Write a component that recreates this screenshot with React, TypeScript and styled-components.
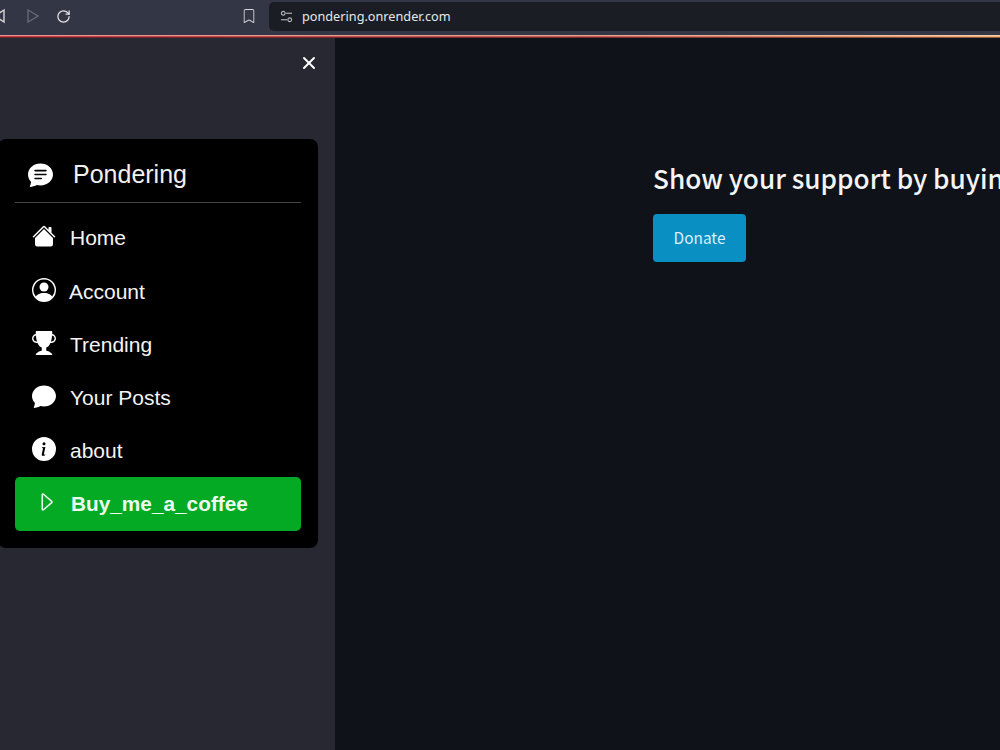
import styled, { createGlobalStyle } from "styled-components";
import { IconType } from "react-icons";
import {
  BsBookmark,
  BsCaretRight,
  BsChatFill,
  BsChatTextFill,
  BsHouseFill,
  BsInfoCircleFill,
  BsPersonCircle,
  BsTrophyFill,
} from "react-icons/bs";
import { LuRotateCw, LuX } from "react-icons/lu";

const GlobalStyle = createGlobalStyle`
  html, body {
    margin: 0;
    height: 100%;
    background: #0f1219;
    overflow: hidden;
  }
`;

type NavEntry = { label: string; icon: IconType; textGap: number };

const navItems: NavEntry[] = [
  { label: "Home", icon: BsHouseFill, textGap: 14 },
  { label: "Account", icon: BsPersonCircle, textGap: 13 },
  { label: "Trending", icon: BsTrophyFill, textGap: 14 },
  { label: "Your Posts", icon: BsChatFill, textGap: 14 },
  { label: "about", icon: BsInfoCircleFill, textGap: 14 },
];

export default function App() {
  return (
    <>
      <GlobalStyle />
      <Page>
        <Toolbar>
          <BackArrow viewBox="0 0 14 16">
            <path d="M12 2 L3 8 L12 14 Z" />
          </BackArrow>
          <ForwardArrow viewBox="0 0 14 16">
            <path d="M2 2 L12 8 L2 14 Z" />
          </ForwardArrow>
          <Reload>
            <LuRotateCw size={15} />
          </Reload>
          <Bookmark>
            <BsBookmark size={14} />
          </Bookmark>
          <AddressBar>
            <SiteIcon viewBox="0 0 14 14">
              <circle cx="3.5" cy="3.5" r="2" />
              <path d="M6.5 3.5 H13" />
              <circle cx="10.5" cy="10.5" r="2" />
              <path d="M1 10.5 H7.5" />
            </SiteIcon>
            <Url>pondering.onrender.com</Url>
          </AddressBar>
        </Toolbar>
        <LoadBar />
        <Main>
          <Sidebar>
            <CloseButton>
              <LuX size={20} strokeWidth={2.4} />
            </CloseButton>
            <MenuCard>
              <Brand>
                <BsChatTextFill size={25} />
                <BrandName>Pondering</BrandName>
              </Brand>
              <Divider />
              <NavList>
                {navItems.map((item) => (
                  <NavRow key={item.label} $gap={item.textGap}>
                    <NavIcon>
                      <item.icon size={24} />
                    </NavIcon>
                    {item.label}
                  </NavRow>
                ))}
                <CoffeeRow>
                  <CoffeeIcon>
                    <BsCaretRight size={24} />
                  </CoffeeIcon>
                  Buy_me_a_coffee
                </CoffeeRow>
              </NavList>
            </MenuCard>
          </Sidebar>
          <Content>
            <Heading>Show your support by buying me a coffee</Heading>
            <DonateButton>Donate</DonateButton>
          </Content>
        </Main>
      </Page>
    </>
  );
}

const Page = styled.div`
  display: flex;
  flex-direction: column;
  width: 1000px;
  height: 750px;
  overflow: hidden;
`;

const Toolbar = styled.div`
  display: flex;
  align-items: center;
  height: 35px;
  flex: none;
  background: #333644;
  color: #e4e5e9;
`;

const BackArrow = styled.svg`
  width: 14px;
  height: 16px;
  margin-left: -8px;
  margin-top: -3px;
  fill: none;
  stroke: #d5d6da;
  stroke-width: 1.4;
`;

const ForwardArrow = styled(BackArrow)`
  margin-left: 20px;
  stroke: #666a78;
`;

const Reload = styled.span`
  display: flex;
  margin-left: 16px;
  margin-top: -3px;
`;

const Bookmark = styled.span`
  display: flex;
  margin-left: 171px;
  margin-top: -3px;
  color: #d5d6da;
`;

const AddressBar = styled.div`
  display: flex;
  align-items: center;
  gap: 9px;
  height: 29px;
  margin: -3px 0 0 13px;
  padding-left: 11px;
  flex: 1;
  border-radius: 5px 0 0 5px;
  background: #1a1d24;
`;

const SiteIcon = styled.svg`
  width: 13px;
  height: 13px;
  fill: none;
  stroke: #b6b8bf;
  stroke-width: 1.2;
`;

const Url = styled.span`
  font: 12.7px "Noto Sans", sans-serif;
  color: #e6e7ea;
`;

const LoadBar = styled.div`
  height: 3px;
  flex: none;
  background: linear-gradient(
      to bottom,
      rgba(255, 225, 205, 0.55) 0 1px,
      transparent 1px 2px,
      rgba(40, 10, 10, 0.5) 2px
    ),
    linear-gradient(to right, #c23a44, #c85a50 60%, #f0b27a);
`;

const Main = styled.div`
  display: flex;
  flex: 1;
  min-height: 0;
`;

const Sidebar = styled.aside`
  position: relative;
  width: 335px;
  flex: none;
  padding-top: 101px;
  box-sizing: border-box;
  background: #282832;
`;

const CloseButton = styled.span`
  position: absolute;
  top: 15px;
  right: 16px;
  display: flex;
  color: #fff;
`;

const MenuCard = styled.nav`
  width: 320px;
  height: 409px;
  margin-left: -2px;
  padding: 17px 17px 0;
  box-sizing: border-box;
  border-radius: 8px;
  background: #000;
  color: #f4f4f4;
  font-family: "Liberation Sans", Arial, sans-serif;
`;

const Brand = styled.div`
  display: flex;
  align-items: center;
  gap: 20px;
  height: 36px;
  padding-left: 13px;
  color: #fff;
`;

const BrandName = styled.span`
  font-size: 25px;
  color: #f0f0f0;
`;

const Divider = styled.div`
  height: 1px;
  margin: 10px 0 0;
  background: #444;
`;

const NavList = styled.div`
  display: flex;
  flex-direction: column;
  margin-top: 8.75px;
`;

const NavRow = styled.div<{ $gap: number }>`
  display: flex;
  align-items: center;
  gap: ${(p) => p.$gap}px;
  height: 53.25px;
  padding-left: 17px;
  font-size: 21px;
  line-height: 26px;
`;

const NavIcon = styled.span`
  display: flex;
  margin-top: -4px;
  color: #fff;
`;

const CoffeeRow = styled.div`
  display: flex;
  align-items: center;
  gap: 13px;
  height: 53.5px;
  margin-top: -0.75px;
  padding-left: 19px;
  border-radius: 5px;
  background: #04aa23;
  color: #ecfbee;
  font-size: 20.8px;
  font-weight: 700;
`;

const CoffeeIcon = styled.span`
  display: flex;
  margin-top: -5px;
`;

const Content = styled.main`
  flex: 1;
  min-width: 0;
  padding: 122px 0 0 318px;
  overflow: hidden;
  background: #0f1219;
`;

const Heading = styled.h2`
  margin: 0;
  font: 500 26.2px/36px "Noto Sans CJK SC", "Noto Sans", sans-serif;
  color: #f3f4f5;
  white-space: nowrap;
`;

const DonateButton = styled.button`
  display: block;
  width: 93px;
  height: 48px;
  margin-top: 18px;
  padding: 0 0 3px;
  border: 0;
  border-radius: 4px;
  background: #0a8fc2;
  color: #d8f1fb;
  font: 400 15.4px "Noto Sans CJK SC", "Noto Sans", sans-serif;
`;
